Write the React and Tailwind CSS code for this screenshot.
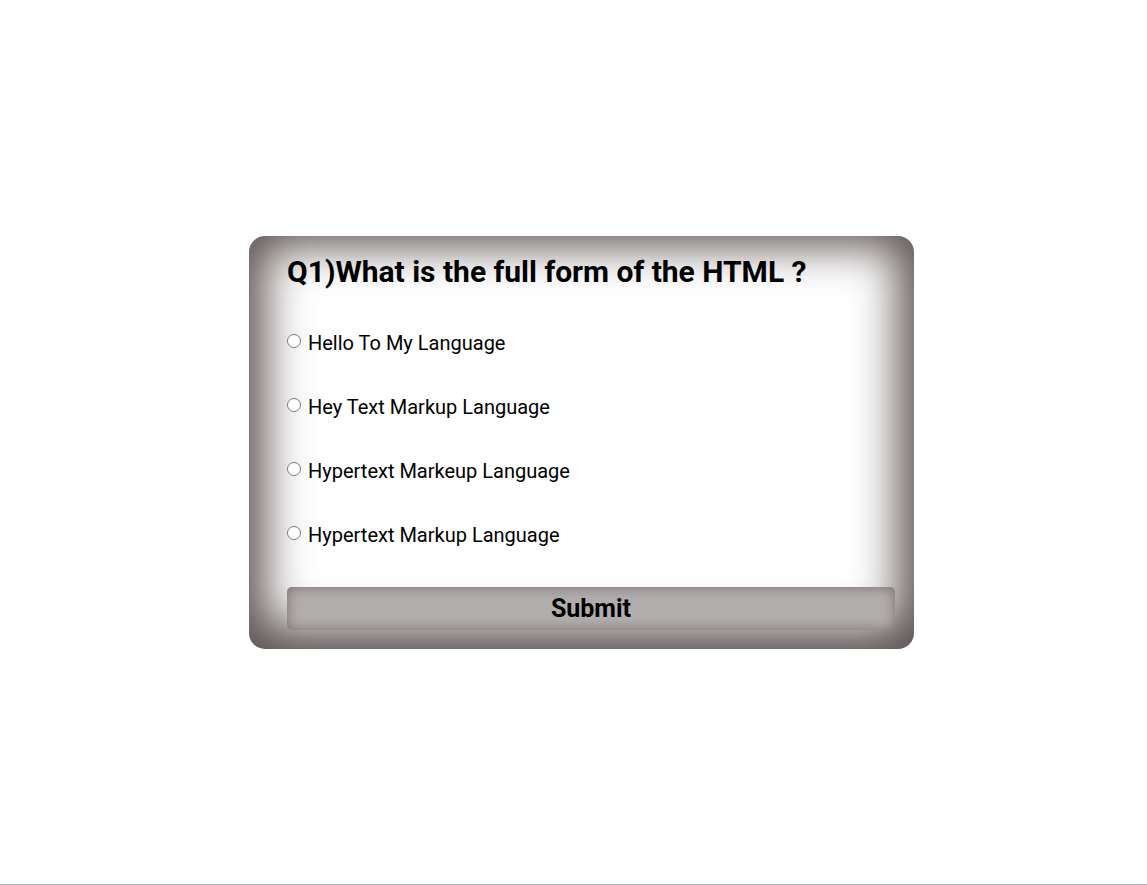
import React from 'react';

const options = [
  'Hello To My Language',
  'Hey Text Markup Language',
  'Hypertext Markeup Language',
  'Hypertext Markup Language',
];

export default function App() {
  return (
    <div className="font-['Roboto',sans-serif] text-black bg-white">
      <div className="h-[884px] flex items-start pl-[249px] pt-[236px]">
        <div className="w-[665px] h-[413px] rounded-[16px] bg-white shadow-[inset_0_-6px_45px_16px_#5c5151] pl-[38px] pr-[19px] pt-[16px]">
          <h1 className="text-[30px] font-bold leading-[40px]">Q1)What is the full form of the HTML ?</h1>
          <div className="mt-[19px] flex flex-col">
            {options.map((o) => (
              <label key={o} className="flex items-center h-[64px] text-[20px] leading-none">
                <input type="radio" name="q1" className="w-[14px] h-[14px] mr-[7px] -mt-[4px]" />
                <span>{o}</span>
              </label>
            ))}
          </div>
          <button className="mt-[20px] w-full h-[43px] rounded-[5px] bg-[#b3aeae] shadow-[inset_0_0_14px_#776d6d] text-[25px] font-bold">
            Submit
          </button>
        </div>
      </div>
      <div className="h-px bg-[#a9b1c1]" />
    </div>
  );
}
